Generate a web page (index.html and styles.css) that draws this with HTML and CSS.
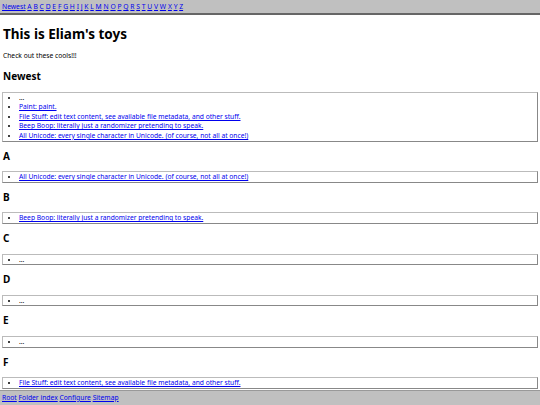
FILE: index.html
```html
<!DOCTYPE html>
<html>
<head>
<meta charset="utf-8">
<title>Eliam's toys</title>
<link rel="stylesheet" href="styles.css">
</head>
<body>
<nav class="topbar">
  <a href="#newest">Newest</a> <a href="#a">A</a> <a href="#b">B</a> <a href="#c">C</a> <a href="#d">D</a> <a href="#e">E</a> <a href="#f">F</a> <a href="#g">G</a> <a href="#h">H</a> <a href="#i">I</a> <a href="#j">J</a> <a href="#k">K</a> <a href="#l">L</a> <a href="#m">M</a> <a href="#n">N</a> <a href="#o">O</a> <a href="#p">P</a> <a href="#q">Q</a> <a href="#r">R</a> <a href="#s">S</a> <a href="#t">T</a> <a href="#u">U</a> <a href="#v">V</a> <a href="#w">W</a> <a href="#x">X</a> <a href="#y">Y</a> <a href="#z">Z</a>
</nav>
<main class="content">
  <h1 class="title">This is Eliam's toys</h1>
  <p class="intro">Check out these cools!!!</p>

  <h2 class="section-title" id="newest">Newest</h2>
  <ul class="box">
    <li>...</li>
    <li><a href="#">Paint: paint.</a></li>
    <li><a href="#">File Stuff: edit text content, see available file metadata, and other stuff.</a></li>
    <li><a href="#">Beep Boop: literally just a randomizer pretending to speak.</a></li>
    <li><a href="#">All Unicode: every single character in Unicode. (of course, not all at once!)</a></li>
  </ul>

  <h2 class="section-title" id="a">A</h2>
  <ul class="box">
    <li><a href="#">All Unicode: every single character in Unicode. (of course, not all at once!)</a></li>
  </ul>

  <h2 class="section-title" id="b">B</h2>
  <ul class="box">
    <li><a href="#">Beep Boop: literally just a randomizer pretending to speak.</a></li>
  </ul>

  <h2 class="section-title" id="c">C</h2>
  <ul class="box">
    <li>...</li>
  </ul>

  <h2 class="section-title" id="d">D</h2>
  <ul class="box">
    <li>...</li>
  </ul>

  <h2 class="section-title" id="e">E</h2>
  <ul class="box">
    <li>...</li>
  </ul>

  <h2 class="section-title" id="f">F</h2>
  <ul class="box">
    <li><a href="#">File Stuff: edit text content, see available file metadata, and other stuff.</a></li>
  </ul>

  <h2 class="section-title" id="g">G</h2>
  <ul class="box">
    <li>...</li>
  </ul>
</main>
<footer class="bottombar">
  <a href="#">Root</a> <a href="#">Folder index</a> <a href="#">Configure</a> <a href="#">Sitemap</a>
</footer>
</body>
</html>
```

FILE: styles.css
```css
html, body {
  margin: 0;
  padding: 0;
  background: #fff;
}
body {
  font-family: "Noto Sans", "Open Sans", sans-serif;
  font-size: 6.7px;
  color: #000;
}
a {
  color: #0000ee;
}
.topbar {
  background: #c0c0c0;
  border-bottom: 2px solid #666;
  padding: 0 2px;
  height: 13px;
  line-height: 13px;
  font-size: 6.75px;
}
.content {
  padding: 0 2px 20px 2px;
}
.title {
  font-size: 13.5px;
  font-weight: bold;
  margin: 10px 1px 8px;
}
.intro {
  margin: 0 1px 10px;
}
.section-title {
  font-size: 10px;
  line-height: 13.6px;
  font-weight: bold;
  margin: 0 1px 8px;
}
.box {
  margin: 0 0 8px;
  padding: 0 0 0 16px;
  border-style: solid;
  border-width: 1px;
  border-color: #bbb #888 #888 #bbb;
  list-style: disc;
  line-height: 9.6px;
}
.bottombar {
  position: fixed;
  left: 0;
  right: 0;
  bottom: 0;
  height: 14px;
  line-height: 14px;
  background: #c0c0c0;
  border-top: 1px solid #999;
  padding: 0 2px;
  font-size: 6.75px;
}
```
